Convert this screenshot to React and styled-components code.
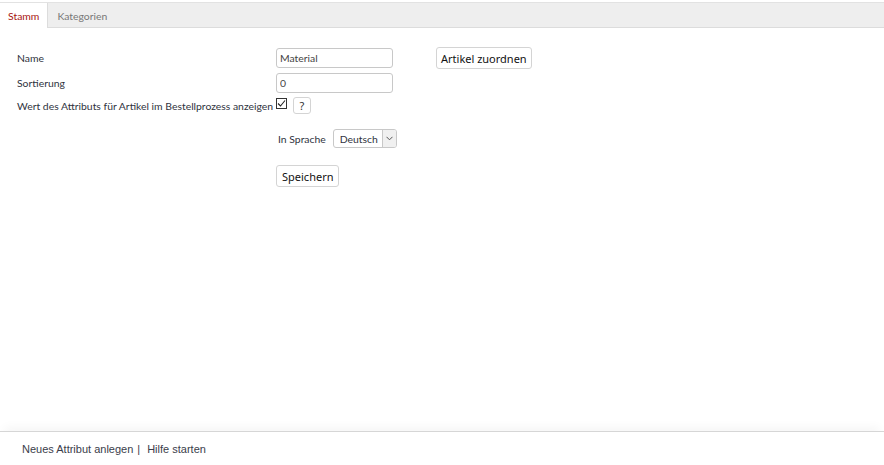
import React from "react";
import styled, { createGlobalStyle } from "styled-components";

const GlobalStyle = createGlobalStyle`
    html, body {
        margin: 0;
        padding: 0;
        background: #fff;
    }
    body {
        font-family: Lato, "Open Sans", sans-serif;
        font-size: 10.4px;
        color: #2f3340;
    }
`;

const Page = styled.div`
    height: 465px;
    display: flex;
    flex-direction: column;
    overflow: hidden;
`;

const TabBar = styled.div`
    margin-top: 2px;
    height: 24px;
    display: flex;
    background: #eeeeee;
    border-top: 1px solid #e2e2e2;
    border-bottom: 1px solid #dcdcdc;
`;

const Tab = styled.div`
    display: flex;
    align-items: center;
    padding: 0 8px 0 ${props => (props.active ? 8 : 9)}px;
    margin-bottom: -1px;
    font-size: 10.4px;
    color: ${props => (props.active ? "#a8150f" : "#777")};
    background: ${props => (props.active ? "#fff" : "transparent")};
    border-right: ${props => (props.active ? "1px solid #dcdcdc" : "none")};
`;

const Content = styled.main`
    flex: 1;
    padding: 19px 0 0 17px;
`;

const Form = styled.div`
    display: grid;
    grid-template-columns: 259px 117px auto;
    row-gap: 4px;
    align-items: center;
`;

const Label = styled.div`
    white-space: nowrap;
`;

const TextInput = styled.input`
    box-sizing: border-box;
    width: 117px;
    height: 20px;
    padding: 0 3px;
    border: 1px solid #c8c8c8;
    border-radius: 3px;
    font-family: Lato, sans-serif;
    font-size: 10.4px;
    color: #444;
    outline: none;
`;

const Button = styled.button`
    box-sizing: border-box;
    height: 22px;
    padding: 0 4px;
    background: #fff;
    border: 1px solid #d4d4d4;
    border-radius: 3px;
    font-family: "Noto Sans", "Open Sans", sans-serif;
    font-size: 11px;
    color: #111;
    cursor: pointer;
`;

const SideButton = styled(Button)`
    justify-self: start;
    margin-left: 43px;
`;

const CheckRow = styled.div`
    grid-column: 1 / 4;
    display: flex;
    align-items: flex-start;
    height: 18px;
`;

const CheckLabel = styled.span`
    width: 259px;
    white-space: nowrap;
    padding-top: 3px;
`;

const Check = styled.span`
    box-sizing: border-box;
    width: 11px;
    height: 11px;
    margin-top: 1px;
    border: 1px solid #333;
    display: flex;
    align-items: center;
    justify-content: center;
`;

const HelpButton = styled.button`
    box-sizing: border-box;
    width: 18px;
    height: 17px;
    margin-left: 6px;
    padding: 0;
    background: #fff;
    border: 1px solid #d4d4d4;
    border-radius: 3px;
    font-family: "Noto Sans", sans-serif;
    font-size: 11px;
    color: #333;
`;

const LangRow = styled.div`
    display: flex;
    align-items: center;
    margin: 14px 0 0 261px;
    gap: 7px;
`;

const Select = styled.div`
    box-sizing: border-box;
    width: 64px;
    height: 19px;
    display: flex;
    border: 1px solid #c8c8c8;
    border-radius: 3px;
    overflow: hidden;
    background: #fff;
`;

const SelectValue = styled.div`
    flex: 1;
    display: flex;
    align-items: center;
    padding-left: 6px;
`;

const SelectArrow = styled.div`
    width: 13px;
    border-left: 1px solid #c8c8c8;
    background: #f0f0f0;
    display: flex;
    align-items: center;
    justify-content: center;
`;

const SaveRow = styled.div`
    margin: 17px 0 0 259px;
`;

const SaveButton = styled(Button)`
    padding: 0 5px;
`;

const Footer = styled.footer`
    height: 33px;
    border-top: 1px solid #d6d6d6;
    box-shadow: 0 -8px 10px -4px rgba(0, 0, 0, 0.04);
    padding-left: 22px;
    display: flex;
    align-items: center;
    font-family: "Liberation Sans", Arial, sans-serif;
    font-size: 11px;
    color: #3a3d4a;
`;

const FooterLink = styled.span`
    cursor: pointer;
`;

const Sep = styled.span`
    margin: 0 7px 0 4px;
`;

export default function App() {
    return (
        <Page>
            <GlobalStyle />
            <TabBar>
                <Tab active>Stamm</Tab>
                <Tab>Kategorien</Tab>
            </TabBar>
            <Content>
                <Form>
                    <Label>Name</Label>
                    <TextInput defaultValue="Material" />
                    <SideButton>Artikel zuordnen</SideButton>
                    <Label>Sortierung</Label>
                    <TextInput defaultValue="0" />
                    <span />
                    <CheckRow>
                        <CheckLabel>Wert des Attributs für Artikel im Bestellprozess anzeigen</CheckLabel>
                        <Check>
                            <svg width="9" height="9" viewBox="0 0 9 9">
                                <path d="M1 4.5 L3.5 7 L8 1.5" fill="none" stroke="#222" strokeWidth="1.1" />
                            </svg>
                        </Check>
                        <HelpButton>?</HelpButton>
                    </CheckRow>
                </Form>
                <LangRow>
                    <Label>In Sprache</Label>
                    <Select>
                        <SelectValue>Deutsch</SelectValue>
                        <SelectArrow>
                            <svg width="7" height="5" viewBox="0 0 7 5">
                                <path d="M0.5 0.8 L3.5 3.8 L6.5 0.8" fill="none" stroke="#555" strokeWidth="1" />
                            </svg>
                        </SelectArrow>
                    </Select>
                </LangRow>
                <SaveRow>
                    <SaveButton>Speichern</SaveButton>
                </SaveRow>
            </Content>
            <Footer>
                <FooterLink>Neues Attribut anlegen</FooterLink>
                <Sep>|</Sep>
                <FooterLink>Hilfe starten</FooterLink>
            </Footer>
        </Page>
    );
}
